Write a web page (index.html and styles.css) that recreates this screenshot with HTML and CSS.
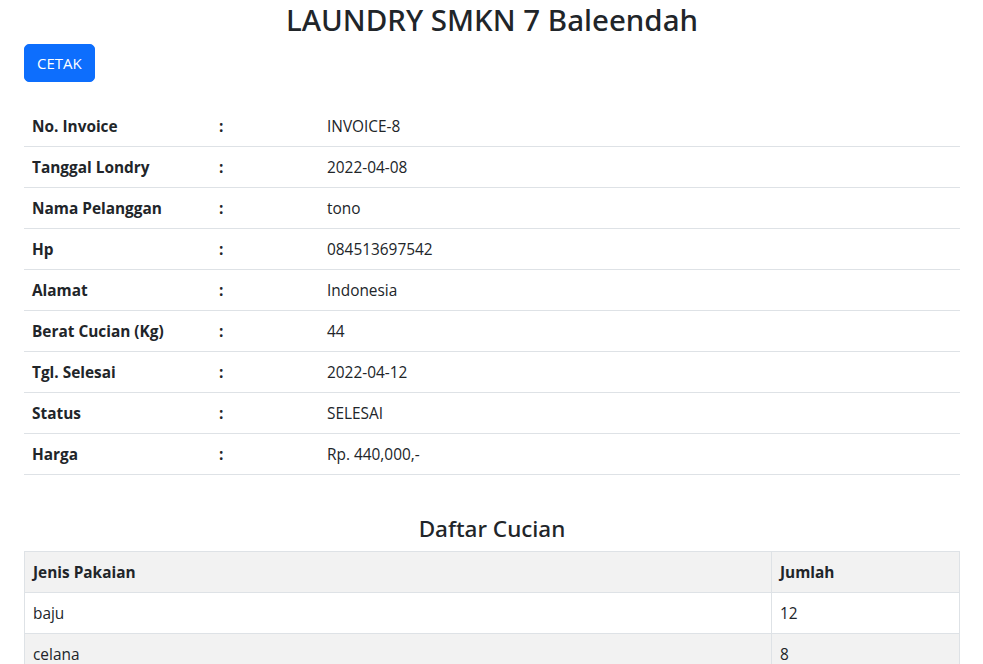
FILE: index.html
```html
<!DOCTYPE html>
<html lang="id">
<head>
<meta charset="utf-8">
<title>Invoice Laundry</title>
<link rel="stylesheet" href="styles.css">
</head>
<body>
<div class="page">
  <h2 class="title">LAUNDRY SMKN 7 Baleendah</h2>
  <button class="btn" type="button">CETAK</button>
  <table class="info">
    <colgroup><col class="c-label"><col class="c-colon"><col></colgroup>
    <tbody>
      <tr><th>No. Invoice</th><th>:</th><td>INVOICE-8</td></tr>
      <tr><th>Tanggal Londry</th><th>:</th><td>2022-04-08</td></tr>
      <tr><th>Nama Pelanggan</th><th>:</th><td>tono</td></tr>
      <tr><th>Hp</th><th>:</th><td>084513697542</td></tr>
      <tr><th>Alamat</th><th>:</th><td>Indonesia</td></tr>
      <tr><th>Berat Cucian (Kg)</th><th>:</th><td>44</td></tr>
      <tr><th>Tgl. Selesai</th><th>:</th><td>2022-04-12</td></tr>
      <tr><th>Status</th><th>:</th><td>SELESAI</td></tr>
      <tr><th>Harga</th><th>:</th><td>Rp. 440,000,-</td></tr>
    </tbody>
  </table>
  <h4 class="subtitle">Daftar Cucian</h4>
  <table class="items">
    <colgroup><col><col class="c-qty"></colgroup>
    <thead>
      <tr><th>Jenis Pakaian</th><th>Jumlah</th></tr>
    </thead>
    <tbody>
      <tr><td>baju</td><td>12</td></tr>
      <tr class="striped"><td>celana</td><td>8</td></tr>
    </tbody>
  </table>
</div>
</body>
</html>
```

FILE: styles.css
```css
* { box-sizing: border-box; }
html, body {
  margin: 0;
  background: #fff;
  color: #212529;
  font-family: "Open Sans", "Noto Sans", "Liberation Sans", sans-serif;
  font-size: 16px;
  line-height: 1.5;
}
.page {
  padding: 0 23px 0 24px;
}
.title {
  margin: 0 0 4px;
  text-align: center;
  font-family: "Noto Sans", "Open Sans", sans-serif;
  font-size: 29.5px;
  font-weight: 500;
  line-height: 40px;
}
.btn {
  display: inline-block;
  height: 38px;
  padding: 6px 12px;
  border: 1px solid #0d6efd;
  border-radius: 5px;
  background: #0d6efd;
  color: #fff;
  font-family: inherit;
  font-size: 15px;
  line-height: 24px;
  vertical-align: top;
}
table {
  width: 100%;
  border-collapse: collapse;
}
.info {
  margin-top: 23px;
  margin-bottom: 16px;
}
.c-label { width: 187px; }
.c-colon { width: 108px; }
.info th, .info td {
  padding: 9px 8px 7px;
  height: 41px;
  text-align: left;
  border-bottom: 1px solid #dee2e6;
  font-size: 15.4px;
}
.info th { font-weight: 700; }
.subtitle {
  margin: 40px 0 8px;
  text-align: center;
  font-family: "Noto Sans", "Open Sans", sans-serif;
  font-size: 22.5px;
  font-weight: 500;
  line-height: 28px;
}
.c-qty { width: 188px; }
.items th, .items td {
  padding: 9px 8px 7px;
  height: 41px;
  text-align: left;
  border: 1px solid #dee2e6;
  font-size: 15.4px;
}
.items thead th { background: #f2f2f2; font-weight: 700; }
.items .striped td { background: #f2f2f2; }
```
